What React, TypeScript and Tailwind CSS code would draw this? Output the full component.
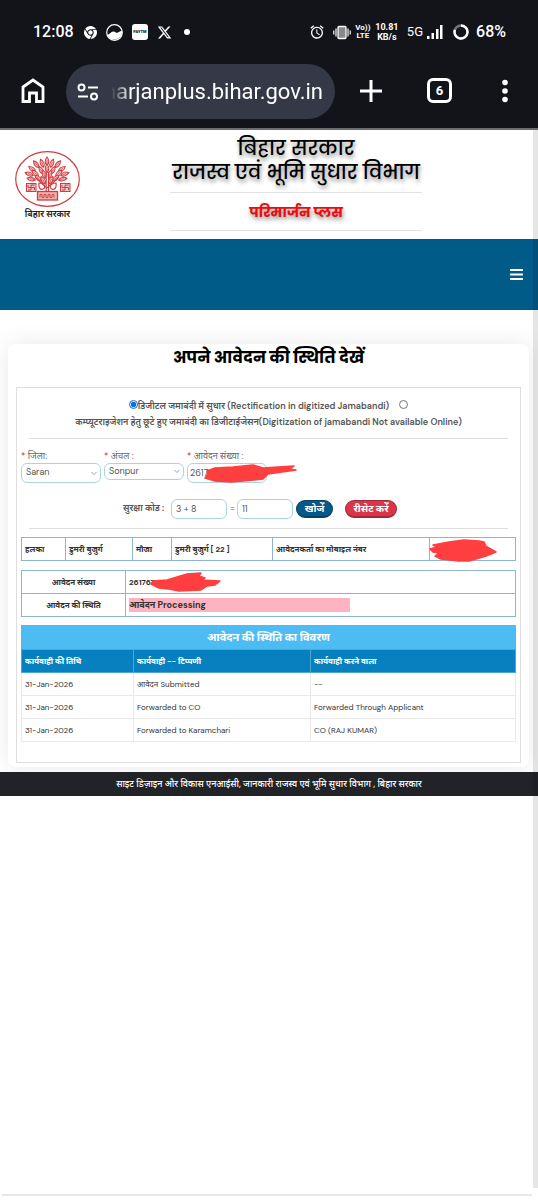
import React from 'react';
import { FaChrome, FaXTwitter } from 'react-icons/fa6';
import { MdAlarm } from 'react-icons/md';

interface HistoryEntry {
  date: string;
  remark: string;
  by: string;
}

const history: HistoryEntry[] = [
  { date: '31-Jan-2026', remark: 'आवेदन Submitted', by: '--' },
  { date: '31-Jan-2026', remark: 'Forwarded to CO', by: 'Forwarded Through Applicant' },
  { date: '31-Jan-2026', remark: 'Forwarded to Karamchari', by: 'CO (RAJ KUMAR)' },
];

// x, y, rotation of every leaf on the tree
const leaves: number[][] = [
  [32, 10, 0], [27, 12, -22], [37, 12, 22], [21, 13, -38], [43, 13, 38], [32, 17, 0],
  [17, 18, -52], [47, 18, 52], [26, 19, -28], [38, 19, 28], [14, 23, -70], [50, 23, 70],
  [20, 22, -48], [44, 22, 48], [29, 23, -14], [35, 23, 14], [16, 28, -78], [48, 28, 78],
  [23, 27, -50], [41, 27, 50], [28, 29, -28], [36, 29, 28],
];

const StatusBar: React.FC = () => (
  <div className="flex h-16 items-center pl-[33px] pr-8 font-['Roboto',sans-serif] text-white">
    <span className="w-[51px] text-base font-medium">12:08</span>
    <div className="flex items-center gap-[9px]">
      <FaChrome size={13} />
      <svg width="17" height="17" viewBox="0 0 17 17">
        <circle cx="8.500" cy="8.500" r="7.800" fill="none" stroke="white" strokeWidth="1.200" />
        <path d="M1 10.500C4 11 5 7 7.500 7.500S10 9.500 12 8.500 15 7 16 6.500A7.800 7.800 0 0 1 1 10.500Z" fill="white" />
      </svg>
      <span className="flex h-4 w-4 items-center justify-center rounded-[3px] bg-white text-[4px] font-black text-[#13141a]">PAYTM</span>
      <FaXTwitter size={15} />
    </div>
    <span className="ml-3 h-[6px] w-[6px] rounded-full bg-white" />

    <div className="ml-auto flex items-center">
      <MdAlarm size={16} />
      <svg className="ml-2" width="18" height="16" viewBox="0 0 18 16" fill="none" stroke="white">
        <rect x="5" y="2.500" width="8" height="12" rx="1" fill="#888" strokeWidth="1.300" />
        <path d="M3 4.500v8M.8 6.500v4M15 4.500v8M17.200 6.500v4" strokeWidth="1.200" />
      </svg>
      <span className="ml-1 w-4 text-center text-[8px] font-bold leading-[8px]">Vo))<br />LTE</span>
      <span className="ml-1 w-6 text-center text-[9px] font-bold leading-[10px]">10.81<br />KB/s</span>
      <span className="ml-2 text-[13px]">5G</span>
      <svg className="ml-1" width="16" height="16" viewBox="0 0 16 16" fill="white">
        <rect x="0" y="12" width="2.500" height="3" />
        <rect x="4.500" y="9" width="2.500" height="6" />
        <rect x="9" y="5" width="2.500" height="10" />
        <rect x="13" y="1" width="2.500" height="14" />
      </svg>
      <svg className="ml-2.5" width="16" height="16" viewBox="0 0 16 16" fill="none" strokeWidth="2.400">
        <circle cx="8" cy="8" r="6.500" stroke="#777" />
        <path d="M8 1.500A6.500 6.500 0 1 1 1.900 5.800" stroke="white" />
      </svg>
      <span className="ml-[7px] text-base font-medium">68%</span>
    </div>
  </div>
);

const BrowserBar: React.FC = () => (
  <div className="flex h-[66px] items-start border-b-2 border-[#6b6b70] pl-5 pr-[30px] text-white">
    <button className="mt-3" aria-label="Home">
      <svg width="26" height="28" viewBox="0 0 26 28" fill="none" stroke="white" strokeWidth="2.800">
        <path d="M3 11 13 4l10 7v14.500h-6.500v-8.500h-7v8.500H3z" />
      </svg>
    </button>
    <div className="ml-5 flex h-[55px] min-w-0 flex-1 items-center rounded-full bg-[#353846] pl-[11px] pr-3">
      <svg className="shrink-0" width="22" height="18" viewBox="0 0 22 18" fill="none" stroke="white" strokeWidth="2">
        <circle cx="4.500" cy="4.500" r="3" />
        <path d="M11 4.500h10M1 13.500h10" />
        <circle cx="17" cy="13.500" r="3" />
      </svg>
      <input
        className="ml-3 w-full min-w-0 bg-transparent font-['Roboto',sans-serif] text-[22px] text-white outline-none [mask-image:linear-gradient(to_right,transparent,black_20px)]"
        dir="rtl"
        aria-label="Address"
        readOnly
        value="parimarjanplus.bihar.gov.in"
      />
    </div>
    <button className="ml-6 mt-[15px]" aria-label="New tab">
      <svg width="24" height="24" viewBox="0 0 24 24" stroke="white" strokeWidth="3">
        <path d="M12 1v22M1 12h22" />
      </svg>
    </button>
    <button
      className="ml-11 mt-3.5 flex h-[25px] w-[25px] items-center justify-center rounded-md border-[3px] border-white font-['Roboto',sans-serif] text-[13px] font-bold"
      aria-label="Tabs"
    >
      6
    </button>
    <button className="ml-[50px] mt-[15px]" aria-label="Menu">
      <svg width="6" height="24" viewBox="0 0 6 24" fill="white">
        <circle cx="3" cy="3.500" r="2.800" />
        <circle cx="3" cy="12" r="2.800" />
        <circle cx="3" cy="20.500" r="2.800" />
      </svg>
    </button>
  </div>
);

const Emblem: React.FC = () => (
  <div className="flex w-[65px] flex-col items-center">
    <svg width="65" height="56" viewBox="0 0 65 56" fill="none" stroke="#cf3d40">
      <ellipse cx="32.500" cy="28" rx="31.800" ry="27.300" strokeWidth="1.200" />
      {leaves.map(([x, y, r], i) => (
        <g key={i} transform={`translate(${x} ${y}) rotate(${r})`}>
          <path d="M0-4C2.400-1 2.200 2.500 0 4.500-2.200 2.500-2.400-1 0-4Z" fill="#f3c4c4" strokeWidth="1.100" />
          <path d="M0-1v5" strokeWidth=".6" />
        </g>
      ))}
      <path d="M31.200 21v19M33.500 21v19M32 37 20 26M32 37 44 26" strokeWidth="1.100" />
      <path d="M24 32c-1 7 4 8 6 4-1-4-4-4-6-4ZM41 32c1 7-4 8-6 4 1-4 4-4 6-4Z" strokeWidth="1.200" />
      <rect x="22.500" y="40.500" width="20" height="8.500" fill="#efb0b0" strokeWidth="1.300" />
      <path d="M25 46.500v-3h2v3h2v-3h2v3h2v-3h2v3h2v-3h2v3" strokeWidth=".9" />
      {[11, 45].map((x) => (
        <g key={x} transform={`translate(${x} 32)`}>
          <rect x=".5" y=".5" width="9.500" height="8" fill="#f3c4c4" strokeWidth="1" />
          <path d="M2 2v2.500h6.500V7M5 2v5M5 2h3.500M5 7H2" strokeWidth="1" />
        </g>
      ))}
    </svg>
    <span className="text-[9px] font-semibold leading-[14px] text-[#222]">बिहार सरकार</span>
  </div>
);

const SiteHeader: React.FC = () => (
  <header className="flex h-[109px] items-start pl-[15px]">
    <div className="mt-[21px]">
      <Emblem />
    </div>
    <div className="ml-[90px] w-[252px] text-center">
      <h1 className="flex flex-col items-center whitespace-nowrap border-b border-[#e2e2e2] pb-2 pt-1.5 font-['Poppins','Noto_Sans',sans-serif] text-xl font-medium leading-6 text-black [text-shadow:1px_3px_4px_rgba(0,0,0,0.45)]">
        <span>बिहार सरकार</span>
        <span>राजस्व एवं भूमि सुधार विभाग</span>
      </h1>
      <h2 className="border-b border-[#e2e2e2] pb-1.5 pt-[7px] font-['Poppins','Noto_Sans',sans-serif] text-sm font-bold leading-6 text-[#f00a0a] [text-shadow:1px_3px_4px_rgba(0,0,0,0.45)]">
        परिमार्जन प्लस
      </h2>
    </div>
  </header>
);

const Scribble: React.FC<{ width: number; d: string }> = ({ width, d }) => (
  <svg className="pointer-events-none absolute" width={width} height="24" viewBox={`0 0 ${width} 24`} aria-hidden="true">
    <path d={d} fill="#ff3f3f" stroke="#ff3f3f" strokeWidth="1.500" strokeLinejoin="round" />
  </svg>
);

const fieldClass = 'w-20 rounded-md border border-[#acd3e2] bg-white px-1 text-[9px] text-[#555] outline-none';

const SearchForm: React.FC = () => (
  <form onSubmit={(e) => e.preventDefault()}>
    <div className="mx-3 border-b border-[#dedede] pb-2 pt-2.5 text-center text-[9px] font-semibold leading-4 text-[#555]">
      <input id="digitized" name="kind" type="radio" defaultChecked className="h-[9px] w-[9px] accent-[#0b6fe0]" />
      <label htmlFor="digitized">डिजीटल जमाबंदी में सुधार (Rectification in digitized Jamabandi)</label>
      <input id="missing" name="kind" type="radio" className="ml-2.5 h-[9px] w-[9px]" />
      <br />
      <label htmlFor="missing">कम्प्यूटराइजेशन हेतु छूटे हुए जमाबंदी का डिजीटाईजेसन(Digitization of jamabandi Not available Online)</label>
    </div>

    <div className="flex gap-[3px] px-1 pt-2.5 text-[9px] text-[#666]">
      <div className="flex flex-col">
        <label htmlFor="district" className="leading-[14px]"><span className="text-[#c0392b]">*</span> जिला:</label>
        <div className="relative">
          <select id="district" className={`${fieldClass} h-5 appearance-none`}>
            <option>Saran</option>
          </select>
          <svg className="pointer-events-none absolute right-1 top-2" width="6" height="5" viewBox="0 0 6 5" fill="none" stroke="#8aa">
            <path d="m.5 1 2.500 2.500L5.500 1" />
          </svg>
        </div>
      </div>
      <div className="flex flex-col">
        <label htmlFor="circle" className="leading-[14px]"><span className="text-[#c0392b]">*</span> अंचल :</label>
        <div className="relative">
          <select id="circle" className={`${fieldClass} h-[17px] appearance-none`}>
            <option>Sonpur</option>
          </select>
          <svg className="pointer-events-none absolute right-1 top-1.5" width="6" height="5" viewBox="0 0 6 5" fill="none" stroke="#8aa">
            <path d="m.5 1 2.500 2.500L5.500 1" />
          </svg>
        </div>
      </div>
      <div className="flex flex-col">
        <label htmlFor="application" className="leading-[14px]"><span className="text-[#c0392b]">*</span> आवेदन संख्या :</label>
        <div className="relative flex">
          <input id="application" className="h-5 w-20 rounded-md border border-[#acd3e2] bg-white px-0.5 text-[9px] text-[#555] outline-none" defaultValue="2617" />
          <div className="absolute left-4 top-0">
            <Scribble width={110} d="M2 15 5 11 4 8 12 5 30 4 50 2 60 5 91 3 87 6 93 7 65 11 60 16 40 18 28 19 12 18Z" />
          </div>
        </div>
      </div>
    </div>

    <div className="mx-3 flex h-[46px] items-center border-b border-[#dedede] pl-[94px] pt-[7px] text-[9px] text-[#555]">
      <label htmlFor="captcha" className="w-12 whitespace-nowrap font-semibold">सुरक्षा कोड :</label>
      <input aria-label="Code" readOnly className="h-5 w-14 rounded-md border border-[#acd3e2] px-1 outline-none" value="3 + 8" />
      <span className="w-2.5 pr-0.5 text-right">=</span>
      <input id="captcha" className="h-5 w-14 rounded-md border border-[#acd3e2] px-1 outline-none" defaultValue="11" />
      <button type="submit" className="ml-[3px] h-[18px] w-[37px] rounded-full border border-b-2 border-[#0c4160] bg-[#02598a] text-[10px] font-bold leading-3 text-white">खोजें</button>
      <button type="reset" className="ml-3 h-[18px] w-[52px] whitespace-nowrap rounded-full border border-b-2 border-[#a3293a] bg-[#dc3549] text-[10px] font-bold leading-3 text-white">रीसेट करें</button>
    </div>
  </form>
);

const ApplicationTables: React.FC = () => (
  <div className="px-1 pb-5 pt-2 text-[8px] leading-[14px] text-[#333]">
    <table className="w-full table-fixed border-collapse font-bold [&_td]:h-[23px] [&_td]:border [&_td]:border-[#8db4d4] [&_td]:px-[3px] [&_td]:whitespace-nowrap">
      <tbody>
        <tr>
          <td className="w-[44px]">हलका</td>
          <td className="w-[67px]">डुमरी बुजुर्ग</td>
          <td className="w-[39px]">मौजा</td>
          <td className="w-[101px]">डुमरी बुजुर्ग [ 22 ]</td>
          <td className="w-[157px]">आवेदनकर्ता का मोबाइल नंबर</td>
          <td>
            <div className="relative h-5">
              <div className="absolute -left-1 top-0">
                <Scribble width={68} d="M1 10 8 8 4 6 20 3 35 1 50 2 55 3 57 7 60 9 67 13 57 17 47 20 40 22 30 22 12 20 6 17 10 14 4 13Z" />
              </div>
            </div>
          </td>
        </tr>
      </tbody>
    </table>

    <table className="mt-[9px] w-full table-fixed border-collapse font-bold [&_td]:h-[23px] [&_td]:border [&_td]:border-[#8db4d4] [&_td]:px-[3px] [&_th]:border [&_th]:border-[#8db4d4]">
      <tbody>
        <tr>
          <th scope="row" className="w-[104px]">आवेदन संख्या</th>
          <td>
            <div className="relative">
              261767
              <div className="absolute left-5 -top-1">
                <Scribble width={76} d="M2 13 4 10 18 9 38 3 52 2 50 5 56 7 52 9 71 10 66 14 58 15 52 19 30 20 20 18 10 17Z" />
              </div>
            </div>
          </td>
        </tr>
        <tr>
          <th scope="row">आवेदन की स्थिति</th>
          <td><div className="w-[221px] bg-[#feb3c0] text-[9px]">आवेदन Processing</div></td>
        </tr>
      </tbody>
    </table>

    <table className="mt-2 w-full table-fixed border-collapse text-left [&_td]:h-[23px] [&_td]:border [&_td]:border-[#e9e9e9] [&_td]:px-[3px]">
      <caption className="h-6 bg-[#4dbcf3] text-[11px] font-bold leading-6 text-white">आवेदन की स्थिति का विवरण</caption>
      <thead>
        <tr className="h-[23px] bg-[#0680bf] text-white [&_th]:border [&_th]:border-[#4da7d4] [&_th]:px-[3px]">
          <th className="w-[112px]">कार्यवाही की तिथि</th>
          <th className="w-[177px]">कार्यवाही -- टिप्पणी</th>
          <th>कार्यवाही करने वाला</th>
        </tr>
      </thead>
      <tbody>
        {history.map((entry, i) => (
          <tr key={i}>
            <td>{entry.date}</td>
            <td>{entry.remark}</td>
            <td>{entry.by}</td>
          </tr>
        ))}
      </tbody>
    </table>
  </div>
);

const App: React.FC = () => {
  return (
    <div className="relative flex min-h-screen flex-col bg-white font-['DM_Sans','Inter','Noto_Sans',sans-serif]">
      <div className="relative z-10 bg-[#13141a]">
        <StatusBar />
        <BrowserBar />
      </div>

      <SiteHeader />

      <nav className="flex h-[71px] items-center justify-end bg-[#005b88] pr-[15px] text-white">
        <button aria-label="Toggle navigation">
          <svg width="13" height="11" viewBox="0 0 13 11" fill="white">
            <path d="M0 0h13v2H0zM0 4.500h13v2H0zM0 9h13v2H0z" />
          </svg>
        </button>
      </nav>

      <main className="pb-[5px] pl-2 pr-[9px] pt-[34px]">
        <section className="rounded-lg bg-white px-2 pb-1 shadow-[0_0_25px_rgba(0,0,0,0.09)]">
          <h2 className="h-[43px] text-center font-['Poppins','Noto_Sans',sans-serif] text-base font-bold leading-7 text-black">अपने आवेदन की स्थिति देखें</h2>
          <div className="border border-[#dedede]">
            <SearchForm />
            <ApplicationTables />
          </div>
        </section>
      </main>

      <footer className="h-6 bg-[#222327] text-center text-[9px] font-medium leading-6 text-white">
        साइट डिज़ाइन और विकास एनआईसी, जानकारी राजस्व एवं भूमि सुधार विभाग , बिहार सरकार
      </footer>

      <div className="mb-1 ml-0.5 mr-1.5 mt-auto h-0.5 bg-[#e7e7e7]" />

      {/* Page scroll indicator */}
      <div className="absolute bottom-3 right-0 top-[130px] w-[5px] bg-black/10" />
    </div>
  );
};

export default App;
